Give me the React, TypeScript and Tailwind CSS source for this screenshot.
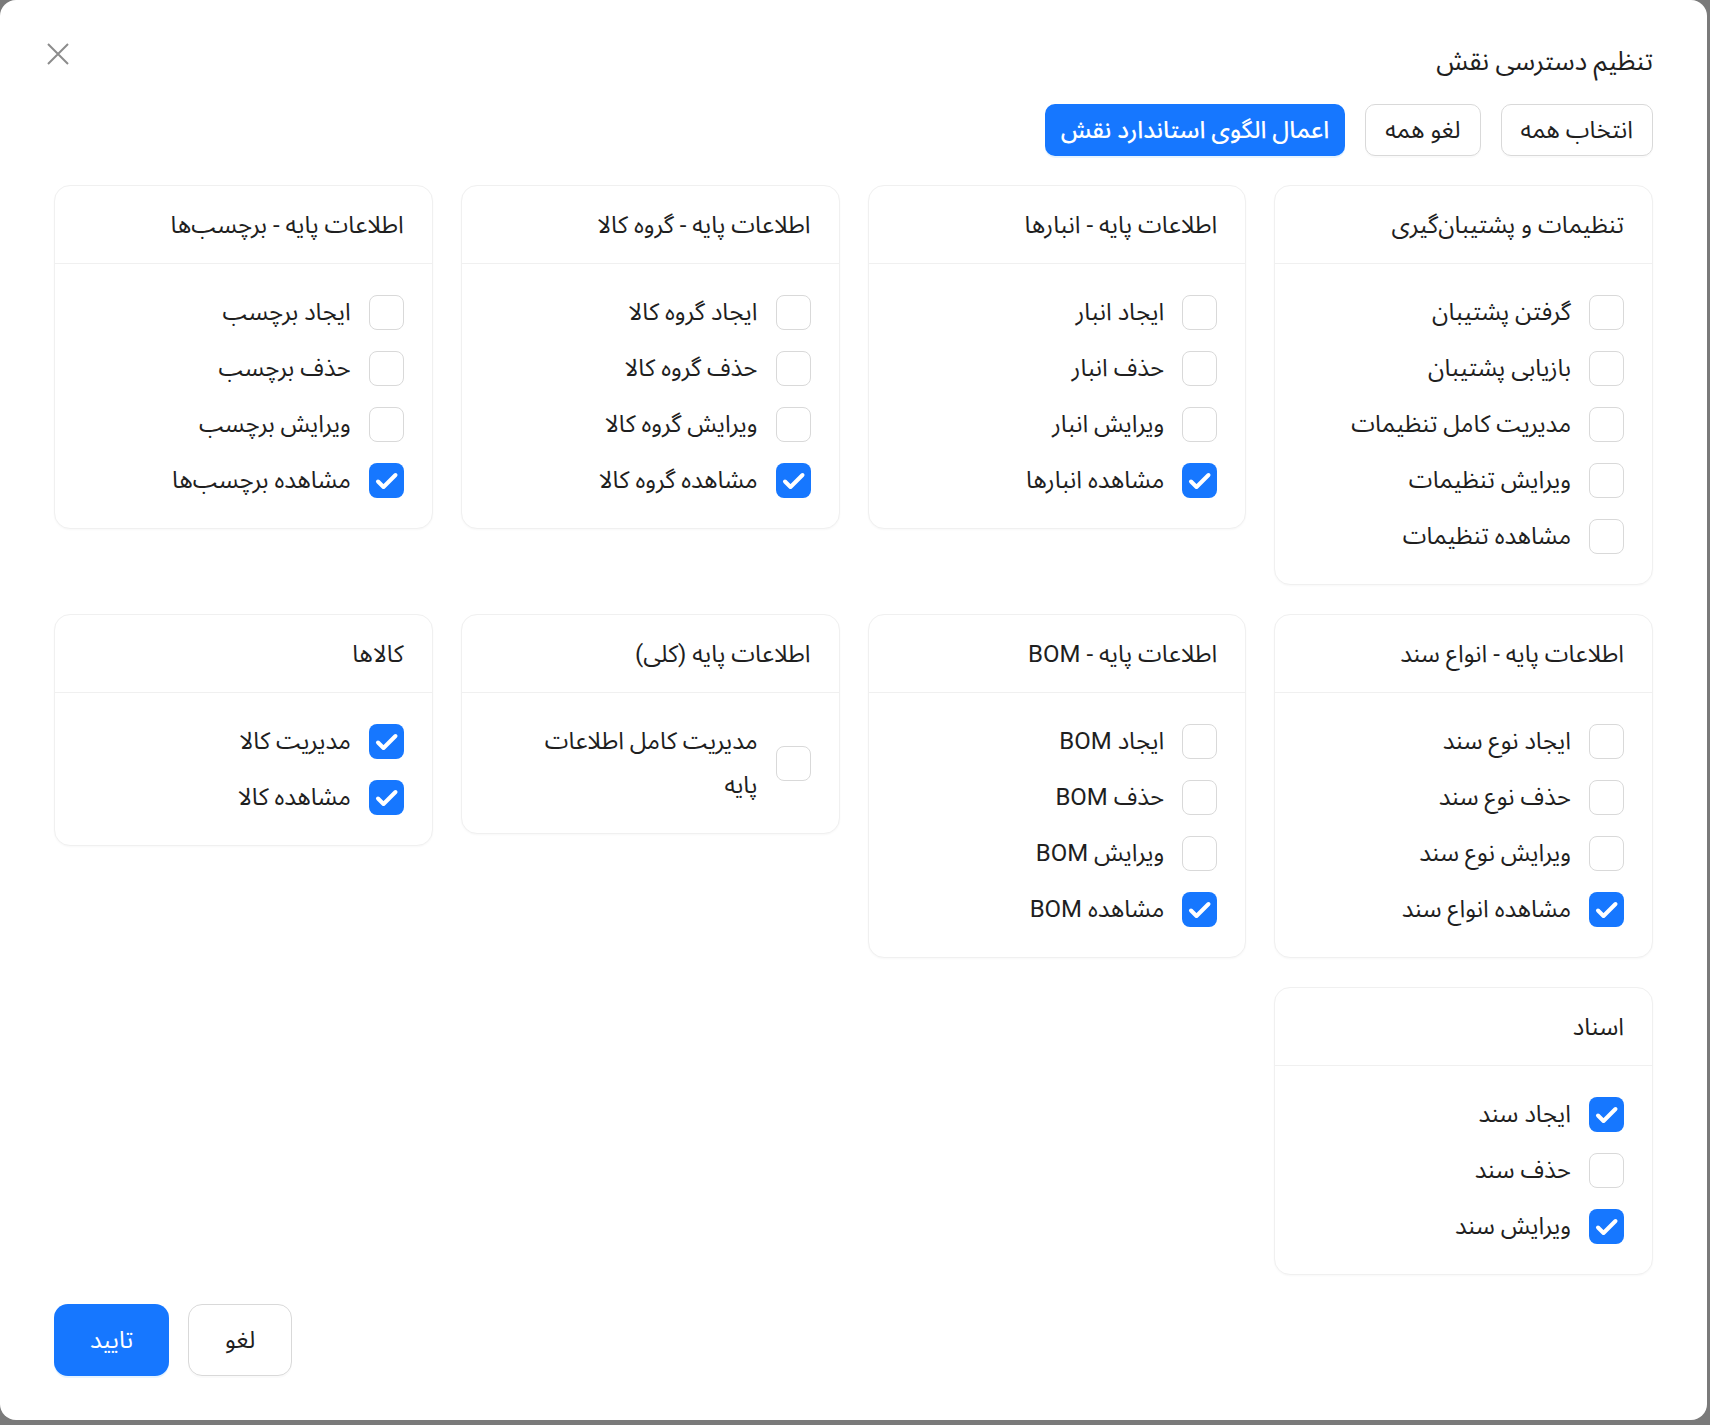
type Perm = { label: string; checked?: boolean };
type Group = { title: string; items: Perm[] };

const groups: Group[] = [
  {
    title: "تنظیمات و پشتیبان‌گیری",
    items: [
      { label: "گرفتن پشتیبان" },
      { label: "بازیابی پشتیبان" },
      { label: "مدیریت کامل تنظیمات" },
      { label: "ویرایش تنظیمات" },
      { label: "مشاهده تنظیمات" },
    ],
  },
  {
    title: "اطلاعات پایه - انبارها",
    items: [
      { label: "ایجاد انبار" },
      { label: "حذف انبار" },
      { label: "ویرایش انبار" },
      { label: "مشاهده انبارها", checked: true },
    ],
  },
  {
    title: "اطلاعات پایه - گروه کالا",
    items: [
      { label: "ایجاد گروه کالا" },
      { label: "حذف گروه کالا" },
      { label: "ویرایش گروه کالا" },
      { label: "مشاهده گروه کالا", checked: true },
    ],
  },
  {
    title: "اطلاعات پایه - برچسب‌ها",
    items: [
      { label: "ایجاد برچسب" },
      { label: "حذف برچسب" },
      { label: "ویرایش برچسب" },
      { label: "مشاهده برچسب‌ها", checked: true },
    ],
  },
  {
    title: "اطلاعات پایه - انواع سند",
    items: [
      { label: "ایجاد نوع سند" },
      { label: "حذف نوع سند" },
      { label: "ویرایش نوع سند" },
      { label: "مشاهده انواع سند", checked: true },
    ],
  },
  {
    title: "اطلاعات پایه - BOM",
    items: [
      { label: "ایجاد BOM" },
      { label: "حذف BOM" },
      { label: "ویرایش BOM" },
      { label: "مشاهده BOM", checked: true },
    ],
  },
  {
    title: "اطلاعات پایه (کلی)",
    items: [{ label: "مدیریت کامل اطلاعات\nپایه" }],
  },
  {
    title: "کالاها",
    items: [
      { label: "مدیریت کالا", checked: true },
      { label: "مشاهده کالا", checked: true },
    ],
  },
  {
    title: "اسناد",
    items: [
      { label: "ایجاد سند", checked: true },
      { label: "حذف سند" },
      { label: "ویرایش سند", checked: true },
    ],
  },
];

function Checkbox({ checked }: { checked?: boolean }) {
  if (checked) {
    return (
      <span className="flex h-[35px] w-[35px] shrink-0 items-center justify-center rounded-[8px] bg-[#1677ff]">
        <svg width="35" height="35" viewBox="0 0 35 35" fill="none">
          <path d="M9 18.5l5.5 5.5L26.5 12" stroke="white" strokeWidth="4" strokeLinecap="round" strokeLinejoin="round" />
        </svg>
      </span>
    );
  }
  return <span className="h-[35px] w-[35px] shrink-0 rounded-[8px] border border-[#d9d9d9] bg-white" />;
}

function PermCard({ group }: { group: Group }) {
  return (
    <div className="rounded-[16px] border border-[#f0f0f0] bg-white shadow-[0_1px_2px_rgba(0,0,0,0.03)]">
      <div className="flex h-[78px] items-center border-b border-[#f0f0f0] px-7 text-[24px]">
        {group.title}
      </div>
      <div className="flex flex-col gap-3 px-7 py-[26px]">
        {group.items.map((item, i) => (
          <label key={i} className="flex items-center gap-[18px]">
            <Checkbox checked={item.checked} />
            <span className="whitespace-pre-line text-[24px] leading-[44px]">{item.label}</span>
          </label>
        ))}
      </div>
    </div>
  );
}

export default function App() {
  return (
    <div className="min-h-screen bg-[#7a7a7a]">
      <div
        dir="rtl"
        className="relative h-[1420px] w-[1707px] rounded-[16px] bg-white px-[54px] pt-[43px] text-[#1f1f1f] font-[family-name:Roboto,'Noto_Sans_Arabic','DejaVu_Sans',sans-serif]"
      >
        <button className="absolute left-[47px] top-[43px] text-[#8c8c8c]">
          <svg width="22" height="22" viewBox="0 0 22 22" fill="none">
            <path d="M1 1l20 20M21 1L1 21" stroke="currentColor" strokeWidth="2" />
          </svg>
        </button>

        <h2 className="text-[26px] leading-[36px]">تنظیم دسترسی نقش</h2>

        <div className="mt-[25px] flex gap-5">
          <button className="h-[52px] rounded-[10px] border border-[#d9d9d9] bg-white px-[19px] text-[24px] shadow-[0_2px_0_rgba(0,0,0,0.02)]">
            انتخاب همه
          </button>
          <button className="h-[52px] rounded-[10px] border border-[#d9d9d9] bg-white px-[19px] text-[24px] shadow-[0_2px_0_rgba(0,0,0,0.02)]">
            لغو همه
          </button>
          <button className="h-[52px] rounded-[10px] bg-[#1677ff] px-4 text-[24px] font-medium text-white shadow-[0_2px_0_rgba(5,145,255,0.1)]">
            اعمال الگوی استاندارد نقش
          </button>
        </div>

        <div className="mt-[29px] grid grid-cols-4 items-start gap-x-7 gap-y-[29px]">
          {groups.map((g, i) => (
            <PermCard key={i} group={g} />
          ))}
        </div>

        <div className="mt-[29px] flex justify-end gap-[19px]">
          <button className="h-[72px] rounded-[14px] border border-[#d9d9d9] bg-white px-9 text-[24px] shadow-[0_2px_0_rgba(0,0,0,0.02)]">
            لغو
          </button>
          <button className="h-[72px] rounded-[14px] bg-[#1677ff] px-9 text-[24px] text-white shadow-[0_2px_0_rgba(5,145,255,0.1)]">
            تایید
          </button>
        </div>
      </div>
    </div>
  );
}
